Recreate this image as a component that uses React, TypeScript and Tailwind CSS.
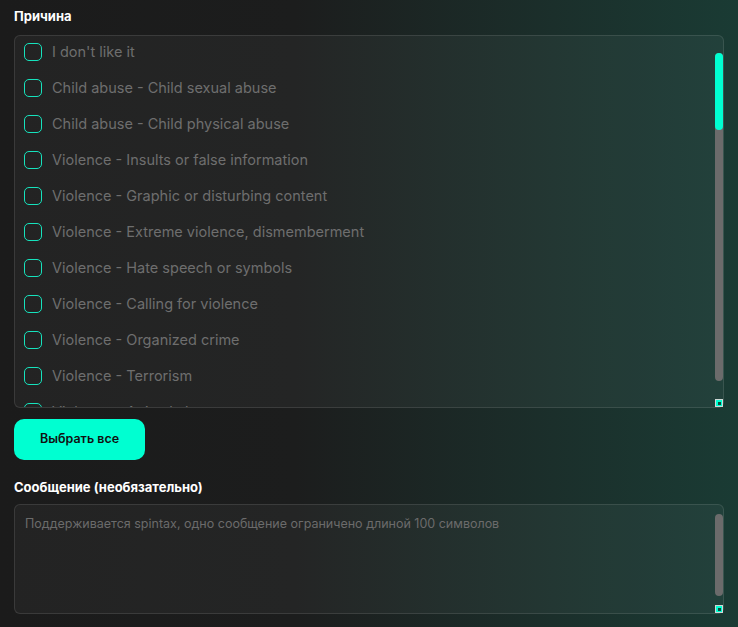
import React, { useEffect, useRef, useState } from 'react';

const reasons = [
  "I don't like it",
  'Child abuse - Child sexual abuse',
  'Child abuse - Child physical abuse',
  'Violence - Insults or false information',
  'Violence - Graphic or disturbing content',
  'Violence - Extreme violence, dismemberment',
  'Violence - Hate speech or symbols',
  'Violence - Calling for violence',
  'Violence - Organized crime',
  'Violence - Terrorism',
  'Violence - Animal abuse',
  'Harassment - Bullying',
  'Harassment - Sexual harassment',
  'Harassment - Threats',
  'Self-harm - Suicide or self-injury',
  'Self-harm - Eating disorders',
  'Dangerous acts - Risky challenges',
  'Dangerous acts - Weapons',
  'Nudity - Adult nudity',
  'Nudity - Sexual activity',
  'Nudity - Sexual solicitation',
  'Illegal goods - Drugs',
  'Illegal goods - Firearms',
  'Illegal goods - Gambling',
  'Fraud - Scam',
  'Fraud - Phishing',
  'Fraud - Fake giveaway',
  'Spam - Fake engagement',
  'Spam - Repetitive content',
  'Misinformation - Election',
  'Misinformation - Health',
  'Misinformation - Manipulated media',
  'Intellectual property - Copyright',
  'Intellectual property - Trademark',
  'Privacy - Personal information',
  'Privacy - Non-consensual images',
  'Impersonation - Celebrity',
  'Impersonation - Me or someone I know',
  'Minor safety - Underage user',
  'Minor safety - Grooming',
  'Hateful behavior - Slurs',
  'Hateful behavior - Extremism',
  'Other - Something else',
  'Other - Account hacked',
];

const TRACK_H = 328;

// little cyan corner like the styled ::-webkit-resizer
function Resizer() {
  return (
    <div className="pointer-events-none absolute right-0 bottom-0 flex h-[8px] w-[8px] items-center justify-center border border-[#cfd8d6] bg-[#00ffd1]">
      <div className="h-[3px] w-[3px] bg-[#114b3f]" />
    </div>
  );
}

export default function App() {
  const [checked, setChecked] = useState<Record<number, boolean>>({});
  const [message, setMessage] = useState('');
  const [thumb, setThumb] = useState({ top: 0, height: 77 });
  const listRef = useRef<HTMLDivElement>(null);

  const updateThumb = () => {
    const el = listRef.current;
    if (!el) return;
    const height = Math.max(24, (TRACK_H * el.clientHeight) / el.scrollHeight);
    const max = el.scrollHeight - el.clientHeight;
    const top = max > 0 ? ((TRACK_H - height) * el.scrollTop) / max : 0;
    setThumb({ top, height });
  };

  useEffect(() => {
    updateThumb();
  }, []);

  const toggle = (i: number) => setChecked((c) => ({ ...c, [i]: !c[i] }));
  const selectAll = () => {
    const all: Record<number, boolean> = {};
    reasons.forEach((_, i) => (all[i] = true));
    setChecked(all);
  };

  return (
    <div className="min-h-screen w-full bg-[linear-gradient(90deg,#1b1b1b_0%,#1c1d1d_40%,#1b2f2b_75%,#1a3b34_100%)] px-[14px] pt-2 pb-[13px] font-['Inter','Noto_Sans',sans-serif]">
      {/* Reason */}
      <div className="mb-[11px] text-[13px] leading-4 font-bold text-white">Причина</div>
      <div className="relative h-[373px] rounded-md border border-white/10 bg-white/[0.04]">
        <div
          ref={listRef}
          onScroll={updateThumb}
          className="h-full overflow-y-scroll [scrollbar-width:none]"
        >
          <div className="flex flex-col gap-[18px] pt-[7px] pb-[12px] pl-[9px]">
            {reasons.map((r, i) => (
              <label key={i} className="flex h-[18px] cursor-pointer items-center gap-[10px]">
                <span
                  onClick={() => toggle(i)}
                  className={`flex h-[18px] w-[18px] shrink-0 items-center justify-center rounded-[5px] border-[1.5px] border-[#16e3bd] ${
                    checked[i] ? 'bg-[#00ffd1]' : ''
                  }`}
                >
                  {checked[i] && (
                    <svg viewBox="0 0 12 12" className="h-3 w-3" fill="none" stroke="#111" strokeWidth={2}>
                      <path d="M2 6.5l2.5 2.5L10 3.5" />
                    </svg>
                  )}
                </span>
                <span className="text-[14.5px] whitespace-nowrap text-[#6e6e6e]">{r}</span>
              </label>
            ))}
          </div>
        </div>
        {/* scrollbar */}
        <div className="pointer-events-none absolute top-[17px] right-0 h-[328px] w-[8px] rounded-[4px] bg-[#6b6b6b]">
          <div
            className="absolute left-0 w-[8px] rounded-[4px] bg-[#00ffd1]"
            style={{ top: thumb.top, height: thumb.height }}
          />
        </div>
        <Resizer />
      </div>

      <button
        onClick={selectAll}
        className="mt-[11px] h-[41px] w-[131px] rounded-[10px] bg-[#00ffd1] text-[12.5px] font-semibold text-[#111]"
      >
        Выбрать все
      </button>

      {/* Message */}
      <div className="mt-[19px] mb-[9px] text-[13px] leading-4 font-bold text-white">Сообщение (необязательно)</div>
      <div className="relative h-[110px] rounded-md border border-white/10 bg-white/[0.04]">
        <textarea
          value={message}
          onChange={(e) => setMessage(e.target.value)}
          placeholder="Поддерживается spintax, одно сообщение ограничено длиной 100 символов"
          className="block h-full w-full resize-none overflow-y-scroll bg-transparent px-[10px] py-[10px] text-[12.5px] text-white outline-none [scrollbar-width:none] placeholder:text-[#6b6b6b]"
        />
        <div className="pointer-events-none absolute top-[9px] right-0 h-[82px] w-[8px] rounded-[4px] bg-[#6b6b6b]" />
        <Resizer />
      </div>
    </div>
  );
}
